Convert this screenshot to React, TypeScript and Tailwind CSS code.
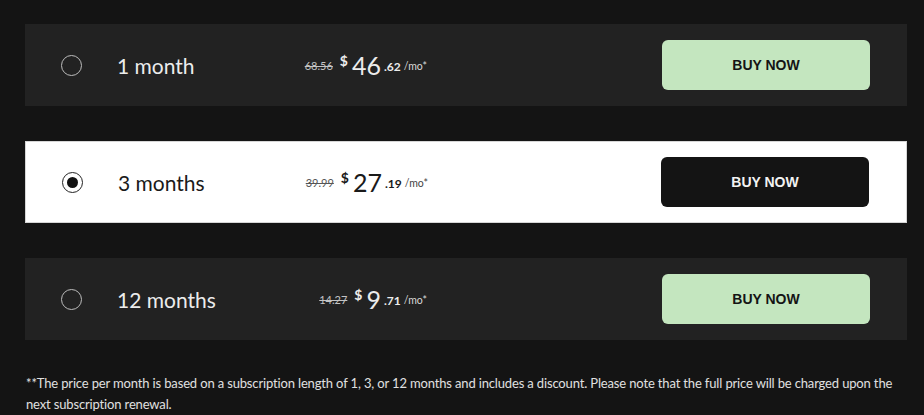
import React from "react";

type Plan = {
    label: string;
    oldPrice: string;
    whole: string;
    cents: string;
    selected?: boolean;
};

const plans: Plan[] = [
    { label: "1 month", oldPrice: "68.56", whole: "46", cents: ".62" },
    { label: "3 months", oldPrice: "39.99", whole: "27", cents: ".19", selected: true },
    { label: "12 months", oldPrice: "14.27", whole: "9", cents: ".71" },
];

function Radio({ checked }: { checked?: boolean }) {
    return (
        <span
            className={`flex h-[21px] w-[21px] shrink-0 items-center justify-center rounded-full border-[1.5px] ${
                checked ? "border-[#222]" : "border-[#bdbdbd]"
            }`}
        >
            {checked && <span className="h-[11px] w-[11px] rounded-full bg-[#111]" />}
        </span>
    );
}

function PlanRow({ plan }: { plan: Plan }) {
    const sel = plan.selected;
    return (
        <div
            className={`flex h-[82px] items-center pl-[36px] pr-[37px] ${
                sel ? "border border-[#d6d6d6] bg-white text-[#1a1a1a]" : "bg-[#222222] text-[#ececec]"
            }`}
        >
            <Radio checked={sel} />
            <span className="ml-[35px] w-[150px] text-[21px] leading-none">{plan.label}</span>
            <div className="flex w-[160px] items-center justify-end">
                <span className={`mr-[7px] text-[11px] leading-none line-through ${sel ? "text-[#555]" : "text-[#c4c4c4]"}`}>
                    {plan.oldPrice}
                </span>
                <span className="mr-[4px] self-start pt-[1px] text-[14px] font-bold leading-none">$</span>
                <span className="text-[25px] leading-none">{plan.whole}</span>
                <span className="ml-[3px] mt-[3px] text-[12px] font-bold leading-none">{plan.cents}</span>
                <span className={`ml-[3px] mt-[2px] text-[10.5px] leading-none ${sel ? "text-[#444]" : "text-[#d8d8d8]"}`}>/mo*</span>
            </div>
            <button
                className={`ml-auto flex h-[50px] w-[208px] items-center justify-center rounded-[6px] font-['Liberation_Sans',Arial,sans-serif] text-[14px] font-bold ${
                    sel ? "bg-[#141414] text-[#f2f2f2]" : "bg-[#c4e6bf] text-[#141414]"
                }`}
            >
                BUY NOW
            </button>
        </div>
    );
}

export default function App() {
    return (
        <div className="min-h-[415px] w-[924px] bg-[#141414] font-['Lato',sans-serif]">
            <div className="flex flex-col gap-[35px] pl-[25px] pr-[17px] pt-[24px]">
                {plans.map((p) => (
                    <PlanRow key={p.label} plan={p} />
                ))}
            </div>
            <p className="mt-[33px] pl-[26px] pr-[14px] text-[13px] leading-[21px] tracking-[-0.15px] text-[#e0e0e0]">
                **The price per month is based on a subscription length of 1, 3, or 12 months and includes a discount. Please note that the full price will be charged upon the next subscription renewal.
            </p>
        </div>
    );
}
